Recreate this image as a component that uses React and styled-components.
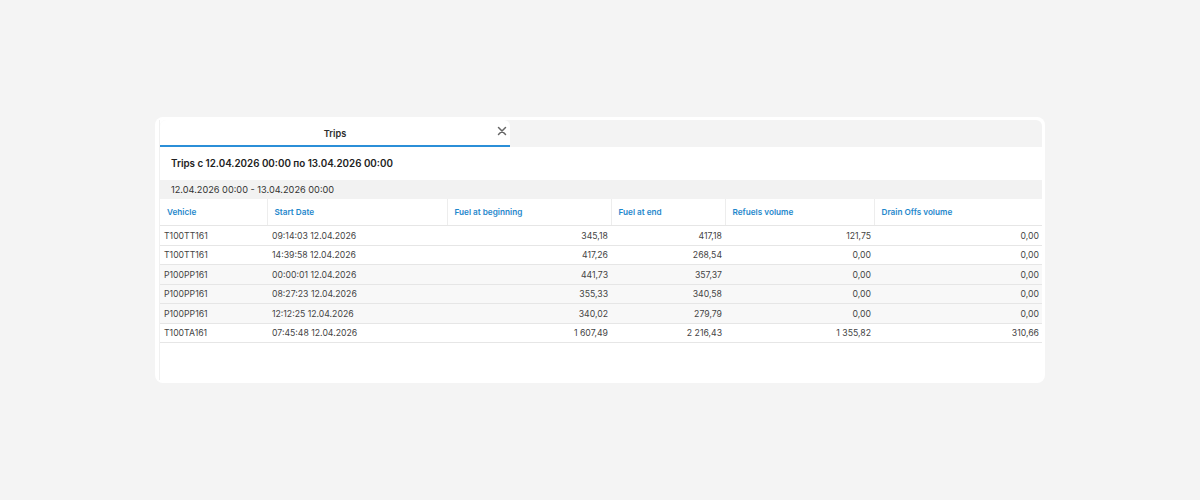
import React from 'react';
import styled, { createGlobalStyle } from 'styled-components';

const GlobalStyle = createGlobalStyle`
	html, body {
		margin: 0;
		padding: 0;
		background: #f4f4f4;
	}
	body {
		font-family: Inter, 'Noto Sans', sans-serif;
		-webkit-font-smoothing: antialiased;
	}
`;

const COLUMNS = [
	{ key: 'vehicle', title: 'Vehicle', width: 107 },
	{ key: 'start', title: 'Start Date', width: 180 },
	{ key: 'fuelBegin', title: 'Fuel at beginning', width: 164, numeric: true },
	{ key: 'fuelEnd', title: 'Fuel at end', width: 114, numeric: true },
	{ key: 'refuels', title: 'Refuels volume', width: 149, numeric: true },
	{ key: 'drains', title: 'Drain Offs volume', width: 168, numeric: true },
];

const ROWS = [
	['T100TT161', '09:14:03 12.04.2026', '345,18', '417,18', '121,75', '0,00'],
	['T100TT161', '14:39:58 12.04.2026', '417,26', '268,54', '0,00', '0,00'],
	['P100PP161', '00:00:01 12.04.2026', '441,73', '357,37', '0,00', '0,00'],
	['P100PP161', '08:27:23 12.04.2026', '355,33', '340,58', '0,00', '0,00'],
	['P100PP161', '12:12:25 12.04.2026', '340,02', '279,79', '0,00', '0,00'],
	['T100TA161', '07:45:48 12.04.2026', '1 607,49', '2 216,43', '1 355,82', '310,66'],
];

const Page = styled.div`
	display: flex;
	align-items: center;
	justify-content: center;
	width: 1200px;
	height: 500px;
`;

const Card = styled.div`
	width: 890px;
	height: 266px;
	box-sizing: border-box;
	padding: 3px 3px 3px 4px;
	background: #ffffff;
	border-radius: 8px;
`;

const Panel = styled.div`
	height: 100%;
	display: flex;
	flex-direction: column;
	border-left: 1px solid #f0f0f0;
	box-sizing: border-box;
`;

const TabBar = styled.div`
	display: flex;
	height: 27px;
	background: #f3f3f3;
	border-radius: 6px 6px 0 0;
`;

const Tab = styled.div`
	position: relative;
	display: flex;
	align-items: center;
	justify-content: center;
	width: 350px;
	box-sizing: border-box;
	background: ${(p) => (p.active ? '#ffffff' : 'transparent')};
	border-bottom: 2px solid ${(p) => (p.active ? '#2b8fd8' : 'transparent')};
	border-radius: 6px 6px 0 0;
	font-size: 9.2px;
	font-weight: 600;
	color: #2c2c2c;
	padding-top: 1px;
`;

const CloseButton = styled.button`
	position: absolute;
	right: 1px;
	top: 4px;
	width: 14px;
	height: 14px;
	padding: 0;
	border: none;
	background: none;
	display: flex;
	align-items: center;
	justify-content: center;
	color: #666;
`;

const Title = styled.div`
	height: 33px;
	display: flex;
	align-items: center;
	padding-left: 11px;
	font-size: 9.8px;
	font-weight: 600;
	color: #222;
`;

const GroupRow = styled.div`
	height: 19px;
	display: flex;
	align-items: center;
	padding-left: 11px;
	background: #f2f2f2;
	font-size: 9.2px;
	color: #333;
`;

const Table = styled.table`
	width: 882px;
	table-layout: fixed;
	border-collapse: collapse;
	font-size: 8.7px;
`;

const HeadCell = styled.th`
	height: 26px;
	padding: 0 7px;
	text-align: left;
	font-size: 8.2px;
	font-weight: 600;
	color: #1f88cc;
	border-left: 1px solid #ededed;
	border-bottom: 1px solid #e6e6e6;

	&:first-child {
		border-left: none;
	}
`;

const Row = styled.tr`
	height: 19.5px;
	background: ${(p) => (p.shaded ? '#f8f8f8' : '#ffffff')};
	border-bottom: 1px solid #e6e6e6;
`;

const Cell = styled.td`
	padding: ${(p) => (p.numeric ? '1px 3px 0 4px' : '1px 4px 0 4px')};
	text-align: ${(p) => (p.numeric ? 'right' : 'left')};
	color: #444;
	white-space: nowrap;

	&:nth-child(2) {
		padding-left: 5px;
	}
`;

const CloseIcon = () => (
	<svg width="10" height="10" viewBox="0 0 10 10">
		<path d="M1.5 1.5 L8.5 8.5 M8.5 1.5 L1.5 8.5" stroke="currentColor" strokeWidth="1.5" strokeLinecap="round" />
	</svg>
);

const App = () => {
	let shaded = false;
	return (
		<Page>
			<GlobalStyle />
			<Card>
				<Panel>
					<TabBar>
						<Tab active>
							Trips
							<CloseButton>
								<CloseIcon />
							</CloseButton>
						</Tab>
					</TabBar>
					<Title>Trips с 12.04.2026 00:00 по 13.04.2026 00:00</Title>
					<GroupRow>12.04.2026 00:00 - 13.04.2026 00:00</GroupRow>
					<Table>
						<colgroup>
							{COLUMNS.map((col) => (
								<col key={col.key} style={{ width: col.width }} />
							))}
						</colgroup>
						<thead>
							<tr>
								{COLUMNS.map((col) => (
									<HeadCell key={col.key}>{col.title}</HeadCell>
								))}
							</tr>
						</thead>
						<tbody>
							{ROWS.map((row, i) => {
								if (i > 0 && row[0] !== ROWS[i - 1][0]) shaded = !shaded;
								return (
									<Row key={i} shaded={shaded}>
										{row.map((value, j) => (
											<Cell key={j} numeric={COLUMNS[j].numeric}>
												{value}
											</Cell>
										))}
									</Row>
								);
							})}
						</tbody>
					</Table>
				</Panel>
			</Card>
		</Page>
	);
};

export default App;
